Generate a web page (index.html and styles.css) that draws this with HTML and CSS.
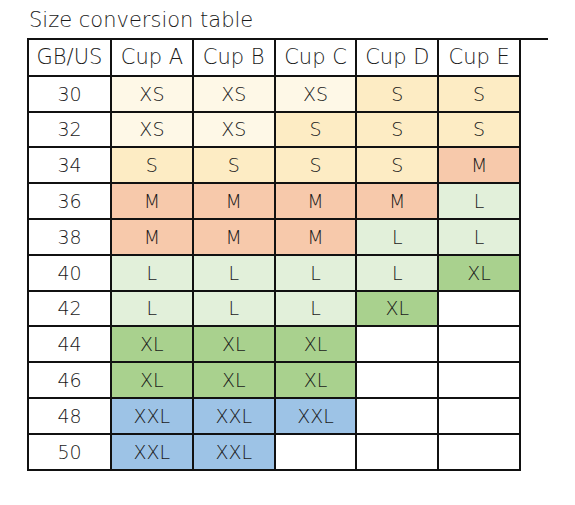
FILE: index.html
```html
<!DOCTYPE html>
<html>
<head>
    <meta charset="UTF-8">
    <title>Size conversion table</title>
    <link rel="stylesheet" href="styles.css">
</head>
<body>
    <div class="page">
        <div class="title">Size conversion table</div>
        <div class="rule">
            <table class="sizes">
                <thead>
                    <tr>
                        <th>GB/US</th>
                        <th>Cup A</th>
                        <th>Cup B</th>
                        <th>Cup C</th>
                        <th>Cup D</th>
                        <th>Cup E</th>
                    </tr>
                </thead>
                <tbody>
                    <tr><td>30</td><td class="xs">XS</td><td class="xs">XS</td><td class="xs">XS</td><td class="s">S</td><td class="s">S</td></tr>
                    <tr><td>32</td><td class="xs">XS</td><td class="xs">XS</td><td class="s">S</td><td class="s">S</td><td class="s">S</td></tr>
                    <tr><td>34</td><td class="s">S</td><td class="s">S</td><td class="s">S</td><td class="s">S</td><td class="m">M</td></tr>
                    <tr><td>36</td><td class="m">M</td><td class="m">M</td><td class="m">M</td><td class="m">M</td><td class="l">L</td></tr>
                    <tr><td>38</td><td class="m">M</td><td class="m">M</td><td class="m">M</td><td class="l">L</td><td class="l">L</td></tr>
                    <tr><td>40</td><td class="l">L</td><td class="l">L</td><td class="l">L</td><td class="l">L</td><td class="xl">XL</td></tr>
                    <tr><td>42</td><td class="l">L</td><td class="l">L</td><td class="l">L</td><td class="xl">XL</td><td></td></tr>
                    <tr><td>44</td><td class="xl">XL</td><td class="xl">XL</td><td class="xl">XL</td><td></td><td></td></tr>
                    <tr><td>46</td><td class="xl">XL</td><td class="xl">XL</td><td class="xl">XL</td><td></td><td></td></tr>
                    <tr><td>48</td><td class="xxl">XXL</td><td class="xxl">XXL</td><td class="xxl">XXL</td><td></td><td></td></tr>
                    <tr><td>50</td><td class="xxl">XXL</td><td class="xxl">XXL</td><td></td><td></td><td></td></tr>
                </tbody>
            </table>
        </div>
    </div>
</body>
</html>
```

FILE: styles.css
```css
* {
    margin: 0;
    padding: 0;
    box-sizing: border-box;
}
body {
    background: white;
    font-family: "DejaVu Sans", Lato, sans-serif;
    font-weight: 200;
    color: #1a1a1a;
}
.page {
    padding: 8px 0 0 27px;
}
.title {
    font-size: 21px;
    line-height: 24px;
    margin-left: 2px;
    margin-bottom: 6px;
}
.rule {
    width: 521px;
    border-top: 2px solid #111;
}
.sizes {
    border-collapse: collapse;
    table-layout: fixed;
    width: 494px;
}
.sizes th, .sizes td {
    border: 2px solid #111;
    height: 35.8px;
    text-align: center;
    font-weight: 200;
    background-clip: padding-box;
}
.sizes thead th {
    border-top: none;
    font-size: 21px;
}
.sizes td {
    font-size: 19px;
}
.sizes th:first-child {
    width: 83px;
}
.xs { background: #fef8e7; }
.s { background: #fdecc4; }
.m { background: #f7c9ab; }
.l { background: #e2f0da; }
.xl { background: #a9d18e; }
.xxl { background: #9dc3e6; }
```
